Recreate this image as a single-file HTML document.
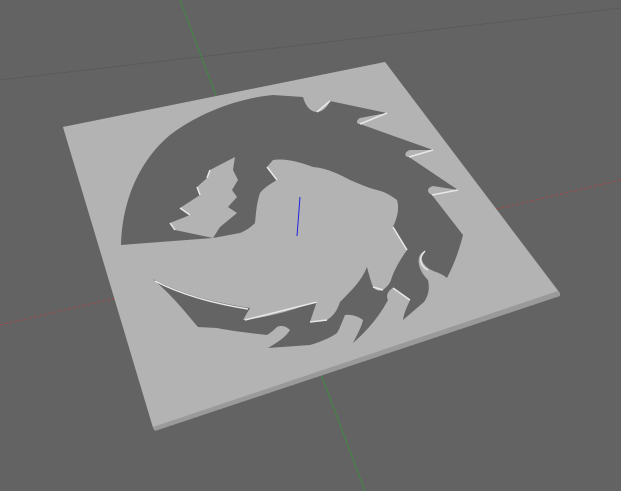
<!DOCTYPE html>
<html><head><style>html,body{margin:0;padding:0;background:#636363;width:621px;height:491px;overflow:hidden}</style></head>
<body>
<svg width="621" height="491" viewBox="0 0 621 491" xmlns="http://www.w3.org/2000/svg">
<rect width="621" height="491" fill="#636363"/>
<line x1="0" y1="80" x2="621" y2="8" stroke="#5a5a5a" stroke-width="1"/>
<line x1="180" y1="0" x2="365" y2="491" stroke="#3f8a3f" stroke-width="1"/>
<line x1="0" y1="325" x2="621" y2="180" stroke="#9a4a4a" stroke-width="1" stroke-dasharray="3,2"/>
<polygon points="63,127 385,62 560,293 560,296 155,431 153,428" fill="#9a9a9a"/>
<polygon points="63,127 385,62 558,291 153,427" fill="#b3b3b3"/>
<path fill="#646464" d="M121,245 C122,200 140,160 170,135 C200,112 240,98 273,95 L303,97 C306,108 312,112 317,112 C323,112 328,106 330,101 L387,113 L360,118 C356,120 356,124 360,124 L433,150 L410,150 C404,152 404,157 409,157 L458,190 L433,186 C426,188 427,193 432,195 L463,235 C458,255 452,268 447,278 C440,272 433,272 428,268 C420,262 420,254 425,251 C416,254 416,268 428,280 C430,290 428,296 424,302 L403,320 C404,312 408,305 410,300 C404,296 396,292 393,288 C387,291 386,297 388,300 C380,315 368,330 353,343 C357,335 362,326 363,320 C358,316 350,314 345,315 C342,322 340,328 337,333 C330,338 320,342 310,345 C296,346 282,347 268,348 C278,342 286,337 290,330 C286,326 281,325 277,327 C273,331 270,333 267,335 C250,333 232,331 217,328 L198,327 C190,318 175,298 153,279 C180,293 210,302 250,308 L243,320 C265,318 295,310 317,301 L310,322 C318,322 322,321 327,320 C335,315 338,308 340,302 C352,290 362,280 367,267 C369,275 371,282 373,287 C376,291 380,291 383,290 C388,286 390,283 391,280 C394,270 400,260 407,250 C402,240 396,232 393,227 C396,220 400,210 397,200 C390,195 385,192 377,190 C368,188 360,184 350,180 C335,172 325,168 313,167 C300,162 285,158 273,160 L267,167 C270,172 275,175 277,180 C268,185 262,190 260,193 C256,205 256,215 255,223 C250,228 245,231 240,233 L213,238 Z"/>
<path fill="#b3b3b3" d="M213,238 L220,227 L237,213 L228,207 L237,197 L232,190 L238,180 L233,170 L235,157 L210,170 L207,178 L197,187 L200,195 L180,208 L190,215 L170,223 L175,230 Z"/>
<path fill="none" stroke="#e8e8e8" stroke-width="1.5" d="M210,170 L207,178 M197,187 L200,195 M180,208 L190,215 M170,223 L175,230 M267,167 L277,180 M393,227 L407,250 M360,124 L387,113 M409,157 L433,150 M432,195 L458,190 M425,251 C418,258 420,266 428,270 M393,288 L410,300 M317,112 L330,101 M373,287 L383,290 M155,281 C180,294 210,303 248,309 M245,320 L317,302 M310,322 L327,320"/>
<path fill="#646464" d="M158,192 C165,175 175,160 182,155 C184,162 183,168 180,173 C175,182 165,188 158,192 Z"/>
<line x1="300" y1="197" x2="297" y2="236" stroke="#2222dd" stroke-width="1"/>
</svg>
</body></html>
